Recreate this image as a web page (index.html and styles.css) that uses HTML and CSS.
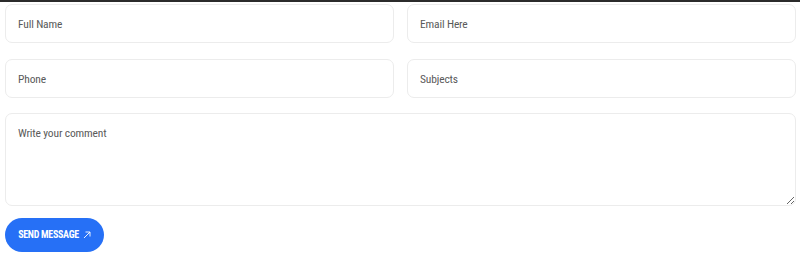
FILE: index.html
```html
<!DOCTYPE html>
<html lang="en">
<head>
    <meta charset="UTF-8">
    <meta name="viewport" content="width=device-width, initial-scale=1.0">
    <title>Contact</title>
    <link rel="stylesheet" href="styles.css">
</head>
<body>
    <form class="contact-form">
        <div class="row">
            <input class="field" type="text" placeholder="Full Name">
            <input class="field" type="email" placeholder="Email Here">
        </div>
        <div class="row last">
            <input class="field" type="text" placeholder="Phone">
            <input class="field" type="text" placeholder="Subjects">
        </div>
        <textarea class="field comment" placeholder="Write your comment"></textarea>
        <button class="send" type="button">Send Message
            <svg class="arrow" width="8" height="8" viewBox="0 0 8 8"><path d="M1 7 L7 1 M2.5 1 H7 V5.5" fill="none" stroke="#fff" stroke-width="0.9"/></svg>
        </button>
    </form>
</body>
</html>
```
FILE: styles.css
```css
/* page */
body {
  margin: 0;
  border-top: 2px solid #2b2b2b;
  font-family: Roboto, "Liberation Sans", sans-serif;
  background: #fff;
}

/* Contact form */
.contact-form {
  padding: 2px 4px 0 5px;
  display: flex;
  flex-direction: column;
}

.row {
  display: grid;
  grid-template-columns: 1fr 1fr;
  column-gap: 13px;
  margin-bottom: 16px;
}

.row.last {
  margin-bottom: 15px;
}

.field {
  box-sizing: border-box;
  width: 100%;
  height: 39px;
  border: 1px solid #ececec;
  border-radius: 7px;
  padding: 0 12px;
  font-family: Roboto, "Liberation Sans", sans-serif;
  font-size: 11.5px;
  font-stretch: condensed;
  letter-spacing: -0.15px;
  color: #5a5a5a;
  background: #fff;
  outline: none;
}

.field::placeholder {
  color: #5a5a5a;
}

.comment {
  height: 93px;
  padding-top: 12px;
  resize: vertical;
  margin-bottom: 12px;
}

.send {
  align-self: flex-start;
  display: flex;
  align-items: center;
  justify-content: center;
  gap: 4px;
  height: 34px;
  width: 99px;
  padding: 0 0 1px 0;
  border: none;
  border-radius: 17px;
  background: #2670f6;
  color: #fff;
  font-family: Roboto, "Liberation Sans", sans-serif;
  font-size: 10px;
  font-weight: 700;
  font-stretch: condensed;
  text-transform: uppercase;
  letter-spacing: -0.3px;
}

.arrow {
  display: block;
}
```
